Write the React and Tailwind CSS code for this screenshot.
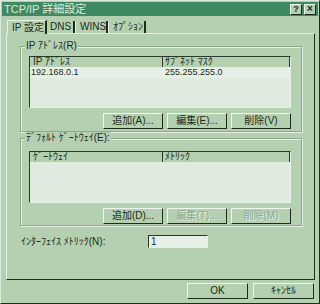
import React from "react";

const font = { fontFamily: '"Liberation Sans","Noto Sans CJK JP",sans-serif' };

function Btn({ children, w = "w-[60px]", disabled = false }) {
  return (
    <div
      className={`${w} h-[16px] flex items-center justify-center border border-t-[#eef6ee] border-l-[#eef6ee] border-r-[#1c2c1c] border-b-[#1c2c1c] bg-[#b4d0b0] text-[10px] leading-none whitespace-nowrap ${
        disabled ? "text-[#8aa88a] [text-shadow:1px_1px_0_#e8f2e8]" : "text-[#1c2a1c]"
      }`}
    >
      {children}
    </div>
  );
}

function ListBox({ h, cols }) {
  return (
    <div className={`w-[262px] ${h} border border-t-[#2a3a2a] border-l-[#2a3a2a] border-r-[#e6f0e6] border-b-[#e6f0e6] bg-[#dfebdf] flex flex-col`}>
      <div className="h-[10px] flex bg-[#b4d0b0] text-[10px] leading-none text-[#1c2a1c] whitespace-nowrap">
        <div className="w-[133px] pl-[3px] flex items-center border-r border-[#2a3a2a]">{cols[0]}</div>
        <div className="flex-1 pl-[2px] flex items-center border-r border-[#2a3a2a]">{cols[1]}</div>
      </div>
      {cols[2] && (
        <div className="flex text-[9px] leading-[11px] text-[#1c2a1c] bg-[#e6f0e6]">
          <div className="w-[133px] pl-[1px]">{cols[2]}</div>
          <div className="flex-1 pl-[2px]">{cols[3]}</div>
        </div>
      )}
    </div>
  );
}

function Group({ label, h, children }) {
  return (
    <div className={`relative w-[282px] ${h} border border-[#8aa88a] shadow-[inset_1px_1px_0_#e6f0e6,1px_1px_0_#e6f0e6]`}>
      <div className="absolute left-[4px] top-[-7px] px-[1px] bg-[#b4d0b0] text-[10px] leading-[12px] text-[#1c2a1c] whitespace-nowrap">
        {label}
      </div>
      {children}
    </div>
  );
}

export default function App() {
  return (
    <div style={font} className="w-[320px] h-[304px] bg-[#b4d0b0] border border-t-[#dbe8db] border-l-[#dbe8db] border-r-[#1c2c1c] border-b-[#1c2c1c] flex flex-col overflow-hidden">
      {/* title bar */}
      <div className="mx-[1px] mt-[1px] h-[14px] bg-[#3f8a63] flex items-center pl-[2px] pr-[2px]">
        <div className="flex-1 text-[11px] leading-none text-[#dcebdc]">TCP/IP 詳細設定</div>
        <div className="flex gap-[2px]">
          <div className="w-[12px] h-[11px] flex items-center justify-center bg-[#b4d0b0] border border-t-[#eef6ee] border-l-[#eef6ee] border-r-[#1c2c1c] border-b-[#1c2c1c] text-[9px] font-bold leading-none text-[#1c2a1c]">?</div>
          <div className="w-[12px] h-[11px] flex items-center justify-center bg-[#b4d0b0] border border-t-[#eef6ee] border-l-[#eef6ee] border-r-[#1c2c1c] border-b-[#1c2c1c] text-[10px] font-bold leading-none text-[#1c2a1c]">×</div>
        </div>
      </div>

      {/* tabs */}
      <div className="ml-[6px] mt-[3px] h-[14px] flex items-end text-[10px] leading-none text-[#1c2a1c] whitespace-nowrap">
        <div className="w-[40px] h-[14px] pl-[4px] flex items-center bg-[#b4d0b0] border-t border-l border-[#e6f0e6] border-r-2 border-r-[#1c2c1c] relative z-10 -mb-[1px]">IP 設定</div>
        <div className="w-[28px] h-[12px] pl-[3px] flex items-center border-r-2 border-[#1c2c1c]">DNS</div>
        <div className="w-[33px] h-[12px] pl-[4px] flex items-center border-l border-l-[#e6f0e6] border-r-2 border-[#1c2c1c]">WINS</div>
        <div className="w-[38px] h-[12px] pl-[4px] flex items-center border-l border-l-[#e6f0e6] border-r-2 border-[#1c2c1c]">ｵﾌﾟｼｮﾝ</div>
      </div>

      {/* panel */}
      <div className="ml-[5px] w-[309px] h-[247px] border border-t-[#e6f0e6] border-l-[#e6f0e6] border-r-[#1c2c1c] border-b-[#1c2c1c] pl-[13px] pt-[12px] flex flex-col">
        <Group label="IP ｱﾄﾞﾚｽ(R)" h="h-[86px]">
          <div className="ml-[8px] mt-[9px]">
            <ListBox h="h-[52px]" cols={["IP ｱﾄﾞﾚｽ", "ｻﾌﾞﾈｯﾄ ﾏｽｸ", "192.168.0.1", "255.255.255.0"]} />
          </div>
          <div className="ml-[82px] mt-[5px] flex gap-[4px]">
            <Btn>追加(A)...</Btn>
            <Btn>編集(E)...</Btn>
            <Btn>削除(V)</Btn>
          </div>
        </Group>

        <div className="mt-[6px]">
          <Group label="ﾃﾞﾌｫﾙﾄ ｹﾞｰﾄｳｪｲ(E):" h="h-[88px]">
            <div className="ml-[8px] mt-[12px]">
              <ListBox h="h-[52px]" cols={["ｹﾞｰﾄｳｪｲ", "ﾒﾄﾘｯｸ"]} />
            </div>
            <div className="ml-[82px] mt-[5px] flex gap-[4px]">
              <Btn>追加(D)...</Btn>
              <Btn disabled>編集(T)...</Btn>
              <Btn disabled>削除(M)</Btn>
            </div>
          </Group>
        </div>

        <div className="mt-[9px] flex items-center">
          <div className="w-[128px] pl-[1px] text-[10px] leading-none text-[#1c2a1c] whitespace-nowrap">ｲﾝﾀｰﾌｪｲｽ ﾒﾄﾘｯｸ(N):</div>
          <div className="w-[60px] h-[13px] border border-t-[#2a3a2a] border-l-[#2a3a2a] border-r-[#e6f0e6] border-b-[#e6f0e6] bg-[#e6f0e6] text-[10px] leading-[11px] pl-[2px] text-[#1c2a1c]">1</div>
        </div>
      </div>

      {/* bottom buttons */}
      <div className="mt-[3px] pr-[5px] flex justify-end gap-[5px]">
        <Btn w="w-[61px]">OK</Btn>
        <Btn w="w-[61px]">ｷｬﾝｾﾙ</Btn>
      </div>
    </div>
  );
}
